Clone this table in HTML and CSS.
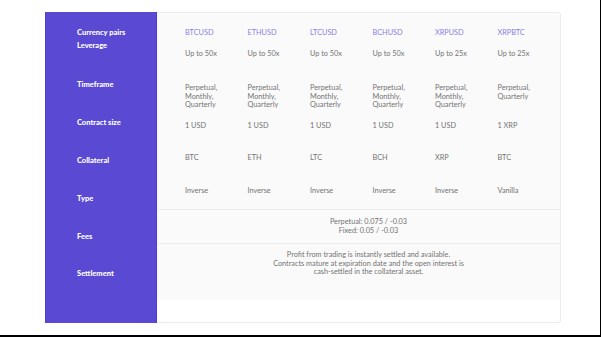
FILE: index.html
```html
<!DOCTYPE html>
<html>
<head>
<meta charset="utf-8">
<link rel="stylesheet" href="styles.css">
</head>
<body>
<div class="page">
  <div class="card">
    <div class="side">
      <div class="label">Currency pairs</div>
      <div class="label l-lev">Leverage</div>
      <div class="label l-time">Timeframe</div>
      <div class="label l-gap">Contract size</div>
      <div class="label l-gap">Collateral</div>
      <div class="label l-gap">Type</div>
      <div class="label l-gap">Fees</div>
      <div class="label l-set">Settlement</div>
    </div>
    <div class="main">
      <div class="table">
        <div class="row r-head">
          <div class="pair">BTCUSD</div>
          <div class="pair">ETHUSD</div>
          <div class="pair">LTCUSD</div>
          <div class="pair">BCHUSD</div>
          <div class="pair">XRPUSD</div>
          <div class="pair">XRPBTC</div>
        </div>
        <div class="row r-lev">
          <div>Up to 50x</div>
          <div>Up to 50x</div>
          <div>Up to 50x</div>
          <div>Up to 50x</div>
          <div>Up to 25x</div>
          <div>Up to 25x</div>
        </div>
        <div class="row r-time">
          <div>Perpetual,<br>Monthly,<br>Quarterly</div>
          <div>Perpetual,<br>Monthly,<br>Quarterly</div>
          <div>Perpetual,<br>Monthly,<br>Quarterly</div>
          <div>Perpetual,<br>Monthly,<br>Quarterly</div>
          <div>Perpetual,<br>Monthly,<br>Quarterly</div>
          <div>Perpetual,<br>Quarterly</div>
        </div>
        <div class="row r-size">
          <div>1 USD</div>
          <div>1 USD</div>
          <div>1 USD</div>
          <div>1 USD</div>
          <div>1 USD</div>
          <div>1 XRP</div>
        </div>
        <div class="row r-coll">
          <div>BTC</div>
          <div>ETH</div>
          <div>LTC</div>
          <div>BCH</div>
          <div>XRP</div>
          <div>BTC</div>
        </div>
        <div class="row r-type">
          <div>Inverse</div>
          <div>Inverse</div>
          <div>Inverse</div>
          <div>Inverse</div>
          <div>Inverse</div>
          <div>Vanilla</div>
        </div>
        <div class="wide w-fees">Perpetual: 0.075 / -0.03<br>Fixed: 0.05 / -0.03</div>
        <div class="wide w-set">Profit from trading is instantly settled and available.<br>Contracts mature at expiration date and the open interest is<br>cash-settled in the collateral asset.</div>
      </div>
    </div>
  </div>
</div>
</body>
</html>
```
FILE: styles.css
```css
html {
  background: #000;
}
body {
  margin: 0;
  font-family: Lato, "Noto Sans", sans-serif;
}
.page {
  width: 600px;
  height: 335px;
  background: #fff;
  padding: 12px 0 0 45px;
  box-sizing: border-box;
}
.card {
  width: 516px;
  height: 311px;
  display: flex;
  border: 1px solid #ececec;
  border-left: none;
  border-radius: 0 3px 3px 0;
  box-sizing: border-box;
  background: #fff;
}
.side {
  width: 112px;
  margin-top: -1px;
  margin-bottom: -1px;
  background: #5a49d3;
  border-right: 1px solid #4f36ea;
  border-left: 1px solid #5140c8;
  box-sizing: border-box;
  padding: 16px 0 0 31px;
  display: flex;
  flex-direction: column;
}
.label {
  color: #fff;
  font-weight: 900;
  font-size: 7.5px;
  line-height: 10px;
  height: 10px;
}
.l-lev { margin-top: 3px; }
.l-time { margin-top: 29px; }
.l-gap { margin-top: 28px; }
.l-set { margin-top: 27px; }
.main {
  flex: 1;
}
.table {
  background: #fafafa;
  padding-bottom: 23px;
}
.row {
  display: grid;
  grid-template-columns: repeat(6, 62.5px);
  padding-left: 28px;
  font-size: 7.3px;
  line-height: 8.5px;
  color: #737373;
}
.pair {
  color: #8a7ee6;
}
.r-head { padding-top: 16px; }
.r-lev { margin-top: 12.5px; }
.r-time { margin-top: 25.5px; }
.r-size { margin-top: 12.5px; }
.r-coll { margin-top: 23.5px; }
.r-type { margin-top: 24.5px; padding-bottom: 13px; }
.wide {
  border-top: 1px solid #ececec;
  padding: 8.5px 8px 7.5px 28px;
  text-align: center;
  font-size: 7.3px;
  line-height: 8.5px;
  color: #737373;
}
.w-set {
  padding-top: 7.5px;
  padding-bottom: 0;
}
```
